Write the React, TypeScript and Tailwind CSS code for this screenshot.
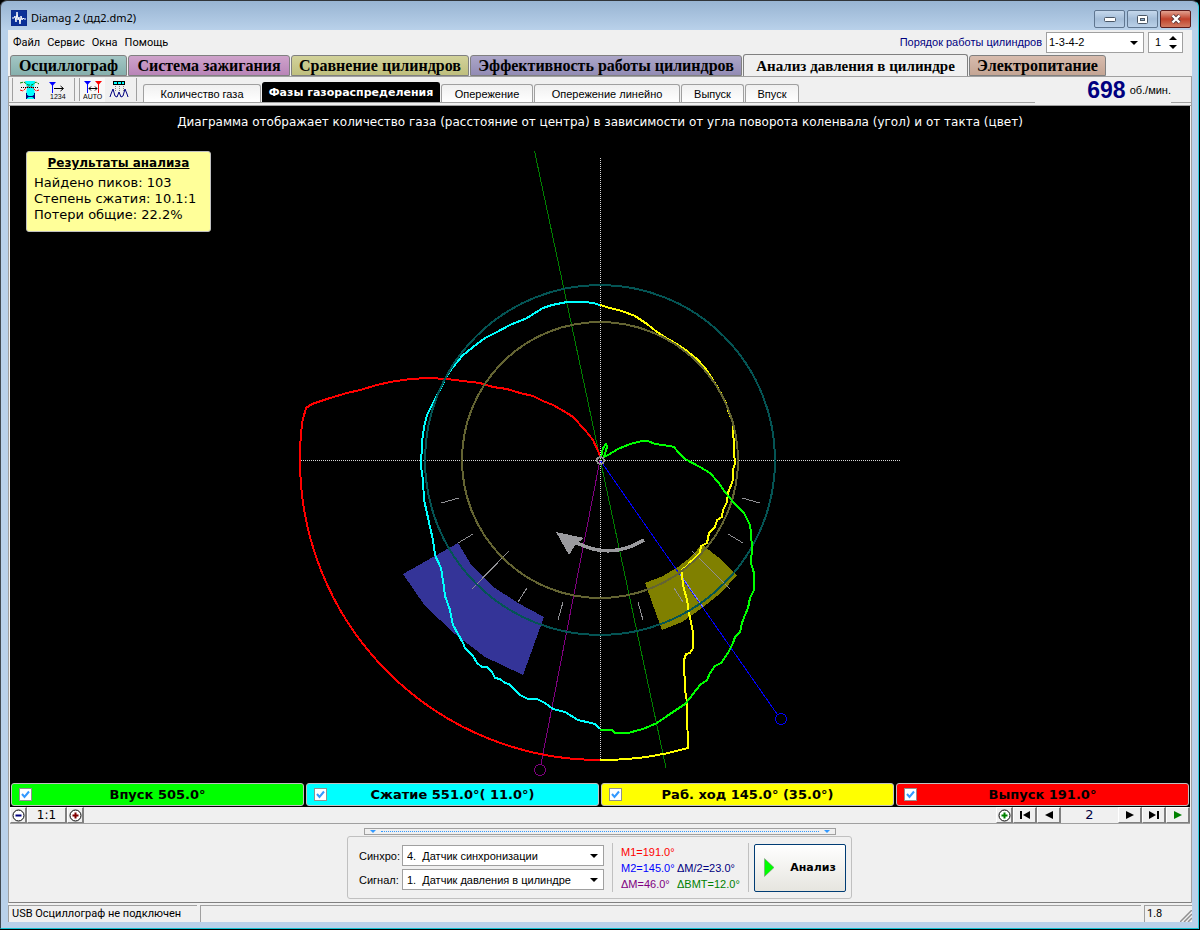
import React, { useState } from 'react'
import clsx from 'clsx'

const MAIN_TABS = [
  { label: 'Осциллограф', className: 'w-[117px] from-[#a3c6c4] to-[#86b0ad]' },
  { label: 'Система зажигания', className: 'w-[162px] from-[#cfa3cb] to-[#b985b8]' },
  { label: 'Сравнение цилиндров', className: 'w-[178px] from-[#d2d29a] to-[#bfbf7e]' },
  { label: 'Эффективность работы цилиндров', className: 'w-[272px] from-[#aca6c8] to-[#938cb5]' },
  { label: 'Анализ давления в цилиндре', className: 'w-[225px]', active: true },
  { label: 'Электропитание', className: 'w-[137px] from-[#d8bcae] to-[#c4a594]' },
]

const SUB_TABS = [
  { label: 'Количество газа', className: 'w-[118px]' },
  { label: 'Фазы газораспределения', className: 'w-[178px]', active: true },
  { label: 'Опережение', className: 'w-[92px]' },
  { label: 'Опережение линейно', className: 'w-[146px]' },
  { label: 'Выпуск', className: 'w-[63px]' },
  { label: 'Впуск', className: 'w-[54px]' },
]

const STROKES = [
  { id: 'intake', label: 'Впуск 505.0°', color: 'bg-[#00ff00]' },
  { id: 'compression', label: 'Сжатие 551.0°( 11.0°)', color: 'bg-[#00ffff]' },
  { id: 'power', label: 'Раб. ход 145.0° (35.0°)', color: 'bg-[#ffff00]' },
  { id: 'exhaust', label: 'Выпуск 191.0°', color: 'bg-[#ff0000]' },
]

const INTAKE_CURVE =
  '600,730 612,730 615,733 622,733 628,733 643,729 657,723 670,714 685,704 690,698 700,685 707,680 710,673 715,666 721,663 728,653 733,643 735,637 740,632 742,623 745,615 748,608 750,598 754,590 754,573 751,563 752,548 751,533 750,525 744,513 733,502 725,492 718,482 710,473 700,467 685,459 678,452 674,447 670,446 655,444 648,441 642,441 630,444 618,449 608,455 604,457 607,447 606,444 603,448 601,457'
const COMPRESSION_CURVE =
  '600,305 593,303 585,302 567,302 552,305 543,308 527,318 510,325 497,332 485,338 477,344 463,355 453,367 446,377 440,390 433,403 427,415 424,427 422,442 421,467 423,480 424,500 427,513 430,527 433,540 435,555 441,568 444,587 445,596 450,610 453,625 463,643 465,648 473,656 477,663 482,667 487,667 492,672 495,678 500,679 505,683 509,684 515,690 520,695 528,699 537,699 545,703 553,709 565,712 578,720 595,724 600,729'
const POWER_CURVE =
  'M600,760 A300,300 0 0 0 688,748 L688,740 L687,720 L687,702 L685,690 L684,660 L686,654 L690,653 L693,648 L693,632 L689,613 L687,600 L683,585 L682,575 L682,570 L688,565 L690,562 L695,558 L700,553 L701,546 L707,543 L709,533 L715,527 L717,520 L722,517 L723,510 L727,502 L728,493 L733,480 L733,470 L735,463 L734,452 L733,423 L729,413 L726,403 L718,388 L713,380 L705,368 L697,359 L687,351 L680,346 L668,339 L657,332 L647,324 L635,316 L622,311 L610,308 L600,305'
const EXHAUST_CURVE =
  'M600,457 L599,453 L593,440 L585,430 L573,417 L567,413 L553,405 L543,401 L533,396 L520,393 L507,389 L493,387 L480,383 L463,381 L447,379 L428,378 L410,379 L390,382 L377,385 L360,390 L347,393 L330,398 L312,404 L306,408 L302,423 L300,447 L300,460 A300,300 0 0 0 600,760'

const TICKS = [
  [441, 503, 459, 498],
  [458, 543, 473, 534],
  [472, 589, 509, 551],
  [518, 602, 527, 588],
  [558, 620, 563, 602],
  [742, 498, 760, 503],
  [728, 534, 743, 543],
  [692, 551, 730, 589],
  [674, 588, 683, 602],
  [638, 602, 643, 620],
]

const AppIcon = () => (
  <svg width="16" height="16" viewBox="0 0 16 16" className="shrink-0">
    <rect width="16" height="16" fill="#0b2a8c" />
    <rect x="1" y="1" width="14" height="14" fill="#0a3098" />
    <path d="M1 8h2l1-2 1 6 1-10 1 8 1-3 1 7 1-8 1 4 1-2 1 1h2" fill="none" stroke="#fff" />
  </svg>
)

const Caret: React.FC<{ className?: string }> = ({ className }) => (
  <svg width="8" height="4" viewBox="0 0 8 4" className={clsx('pointer-events-none', className)}>
    <path d="M0 0h8L4 4z" fill="#000" />
  </svg>
)

const TitleBar: React.FC = () => (
  <header className="h-[29px] shrink-0 flex justify-between pl-[3px]">
    <div className="flex items-center gap-1 pt-1">
      <AppIcon />
      <h1 className="font-['Noto_Sans',sans-serif] text-[11px] leading-4 text-black">Diamag 2 (дд2.dm2)</h1>
    </div>
    <div className="flex gap-[2px] pt-[9px] pr-px">
      <button
        aria-label="Свернуть"
        className="w-[31px] h-[18px] rounded-[2px] border border-[#5f7690] bg-linear-to-b from-[#c5d8ec] via-[#a4bdd8] to-[#bad0e8] flex items-center justify-center"
      >
        <svg width="12" height="6" viewBox="0 0 12 6">
          <rect x="0.5" y="1.5" width="11" height="4" rx="1" fill="#fff" stroke="#4a5766" />
        </svg>
      </button>
      <button
        aria-label="Развернуть"
        className="w-[31px] h-[18px] rounded-[2px] border border-[#5f7690] bg-linear-to-b from-[#c5d8ec] via-[#a4bdd8] to-[#bad0e8] flex items-center justify-center"
      >
        <svg width="11" height="9" viewBox="0 0 11 9">
          <rect x="0.5" y="0.5" width="10" height="8" rx="1" fill="#fff" stroke="#4a5766" />
          <rect x="3.5" y="3.5" width="4" height="2" fill="#8fb0d0" stroke="#4a5766" />
        </svg>
      </button>
      <button
        aria-label="Закрыть"
        className="w-[31px] h-[18px] rounded-[2px] border border-[#5c1a1a] bg-linear-to-b from-[#e0a090] via-[#c0402a] to-[#d07a62] flex items-center justify-center"
      >
        <svg width="12" height="10" viewBox="0 0 12 10">
          <path d="M2.5 1.5l7 7m0-7l-7 7" stroke="#54363a" strokeWidth="4" />
          <path d="M2.5 1.5l7 7m0-7l-7 7" stroke="#fff" strokeWidth="2.4" />
        </svg>
      </button>
    </div>
  </header>
)

const MenuBar: React.FC = () => (
  <div className="h-6 shrink-0 flex items-center justify-between pl-[5px] pr-[9px]">
    <nav className="flex gap-[7px] pt-[2px] font-['Roboto',sans-serif] text-[11px] leading-4 text-black">
      <button>Файл</button>
      <button>Сервис</button>
      <button>Окна</button>
      <button>Помощь</button>
    </nav>
    <div className="flex items-center gap-1 font-['Liberation_Sans',sans-serif] text-[11px]">
      <label htmlFor="order" className="text-[#000080]">
        Порядок работы цилиндров
      </label>
      <div className="relative">
        <select
          id="order"
          className="appearance-none block w-[98px] h-[21px] pl-[2px] bg-white border border-[#a0a0a0] text-black"
        >
          <option>1-3-4-2</option>
          <option>1-2-4-3</option>
        </select>
        <Caret className="absolute right-[6px] top-[9px]" />
      </div>
      <div className="w-[35px] h-[21px] flex items-center justify-between bg-white border border-[#a0a0a0] pl-[6px] pr-[5px]">
        <input aria-label="Цилиндр" defaultValue="1" className="w-3 text-black outline-none" />
        <div className="flex flex-col gap-[5px]">
          <button aria-label="Больше">
            <svg width="8" height="4" viewBox="0 0 8 4" className="block">
              <path d="M0 4h8L4 0z" fill="#000" />
            </svg>
          </button>
          <button aria-label="Меньше">
            <Caret className="block" />
          </button>
        </div>
      </div>
    </div>
  </div>
)

const MainTabs: React.FC = () => (
  <div className="h-[22px] shrink-0 flex items-end gap-px pl-[2px] pr-2" role="tablist">
    {MAIN_TABS.map((tab) => (
      <button
        key={tab.label}
        role="tab"
        aria-selected={!!tab.active}
        className={clsx(
          "shrink-0 whitespace-nowrap rounded-t-[3px] border border-[#808080] font-['Liberation_Serif',serif] leading-5 font-bold text-black",
          tab.active ? 'h-[23px] -mb-px bg-[#f0f0f0] border-b-0 text-[15px]' : 'h-[21px] bg-linear-to-b text-[16px]',
          tab.className
        )}
      >
        {tab.label}
      </button>
    ))}
  </div>
)

const Separator = () => <span className="w-px h-[23px] bg-[#a0a0a0]" />

const ToolBar: React.FC = () => (
  <div className="h-[29px] shrink-0 border-t border-[#a0a0a0] pb-[2px] flex items-end justify-between">
    <div className="flex items-end grow border-b border-[#a0a0a0]">
      <div className="flex items-center pl-[3px] h-[25px]">
        <Separator />
        <button aria-label="Фазы" className="ml-[7px] w-[20px] h-[20px]">
          <svg width="20" height="20" viewBox="0 0 20 20">
            <path d="M5 1h10l-1 7 1 6v5H6v-5l1-6z" fill="#00ffff" />
            <path d="M0 3l4-1 4 3h4l4-3 3 2" fill="none" stroke="#008000" strokeDasharray="3 1" />
            <path d="M0 10l3 1 4-4h5l4 4 3-1" fill="none" stroke="#ff0000" strokeDasharray="3 1" />
            <path d="M1 7.500h18" stroke="#000" strokeDasharray="1 1" />
            <path d="M6.500 13v6M14.500 13v6M7 16.500h7M8 15l-1 1.500 1 1.500M13 15l1 1.500-1 1.500" fill="none" stroke="#000080" />
          </svg>
        </button>
        <button aria-label="Нумерация" className="ml-2 w-[18px] h-[20px]">
          <svg width="18" height="20" viewBox="0 0 18 20">
            <path d="M1 2h7L4.500 6z" fill="#0000ff" />
            <path d="M4.500 3v10" stroke="#0000ff" />
            <path d="M6 8.500h9M12.500 6l3 2.500-3 2.500" fill="none" stroke="#000" />
            <text x="2" y="19" fontSize="7" fontFamily="Liberation Sans, sans-serif">1234</text>
          </svg>
        </button>
        <span className="w-2" />
        <Separator />
        <span className="w-1" />
        <Separator />
        <button aria-label="Авто" className="w-[25px] h-[24px] bg-[#f8f8f8] flex items-center justify-center">
          <svg width="20" height="20" viewBox="0 0 20 20">
            <path d="M1 1h7L4.500 5z" fill="#0000ff" />
            <path d="M4.500 3v10" stroke="#0000ff" />
            <path d="M12 1h7l-3.500 4z" fill="#ff0000" />
            <path d="M15.500 3v10" stroke="#ff0000" />
            <path d="M6 8.500h8M8 6.500l-2 2 2 2M12 6.500l2 2-2 2" fill="none" stroke="#000" />
            <text x="0" y="19" fontSize="7" fontFamily="Liberation Sans, sans-serif">AUTO</text>
          </svg>
        </button>
        <button aria-label="Поиск пиков" className="ml-1 w-[20px] h-[20px]">
          <svg width="20" height="20" viewBox="0 0 20 20">
            <rect x="4.500" y="1.500" width="11" height="3" fill="#00ffff" stroke="#000" />
            <path d="M8.500 1v4M12.500 1v4" stroke="#000" />
            <path d="M6.500 6v6M10.500 6v6M14.500 6v6" stroke="#808080" strokeDasharray="1 1" />
            <path d="M1 17l1-3 2-5 2 7 2 1 2-5 2 5 2-1 2-7 2 5 1 3" fill="none" stroke="#000080" />
          </svg>
        </button>
        <span className="w-[7px]" />
        <Separator />
      </div>
      <div className="flex items-end gap-px pl-[6px]" role="tablist">
        {SUB_TABS.map((tab) => (
          <button
            key={tab.label}
            role="tab"
            aria-selected={!!tab.active}
            className={clsx(
              'shrink-0 whitespace-nowrap rounded-t-[3px] border border-b-0 text-[11px] leading-4',
              tab.active
                ? "h-5 bg-black border-black text-white font-bold font-['DejaVu_Sans',sans-serif]"
                : "h-[18px] border-[#a0a0a0] bg-linear-to-b from-[#f0f0f0] to-white text-black font-['Liberation_Sans',sans-serif]",
              tab.className
            )}
          >
            {tab.label}
          </button>
        ))}
      </div>
    </div>
    <div className="w-[136px] h-full flex items-center justify-end gap-1 font-['Liberation_Sans',sans-serif]">
      <span className="text-[23px] leading-6 font-bold text-[#000080]">698</span>
      <span className="text-[11px] leading-4 text-black">об./мин.</span>
    </div>
    <span className="w-5 border-b border-[#a0a0a0]" />
  </div>
)

const PhaseDiagram: React.FC<{ visible: Record<string, boolean> }> = ({ visible }) => (
  <svg
    viewBox="10 106 1180 677"
    className="absolute inset-0 w-full h-full"
    fill="none"
    shapeRendering="crispEdges"
  >
    <polygon
      points="458,543 472,566 492,586 518,603 544,617 523,675 485,657 455,634 425,606 403,574"
      fill="#343498"
    />
    <polygon
      points="702,544 692,556 678,567 663,576 645,583 662,630 682,622 702,608 722,592 737,575 718,557 705,547"
      fill="#808000"
    />
    <g stroke="#909094">
      {TICKS.map(([x1, y1, x2, y2]) => (
        <line key={`${x1}-${y1}`} x1={x1} y1={y1} x2={x2} y2={y2} />
      ))}
    </g>

    {/* Markers */}
    <line x1="534.5" y1="151" x2="666" y2="768" stroke="#008000" />
    <line x1="600" y1="460" x2="541" y2="764" stroke="#800080" />
    <line x1="600" y1="460" x2="777" y2="714" stroke="#0000ff" />
    <line x1="680" y1="574" x2="703" y2="607" stroke="#8080ff" />
    <circle cx="540" cy="770" r="5.500" stroke="#800080" />
    <circle cx="781" cy="719" r="5.500" stroke="#0000ff" />

    {/* Axes */}
    <path d="M299 460.500H901M600.500 158V761" stroke="#d8d8d8" strokeDasharray="1 1" />

    <g strokeWidth="2" strokeLinejoin="round">
      {visible.exhaust && <path d={EXHAUST_CURVE} stroke="#ff0000" />}
      {visible.compression && <polyline points={COMPRESSION_CURVE} stroke="#00ffff" />}
      {visible.power && <path d={POWER_CURVE} stroke="#ffff00" />}
      <circle cx="600" cy="460" r="175" stroke="#045454" />
      <circle cx="600" cy="460" r="138" stroke="#646432" />
      {visible.intake && <polyline points={INTAKE_CURVE} stroke="#00ff00" />}
      <circle cx="600.500" cy="460.500" r="3.500" stroke="#909090" />
    </g>

    {/* Rotation direction */}
    <path d="M577 543Q611 560 644 540" stroke="#9a9a9e" strokeWidth="3.500" />
    <path d="M556 532L584 538L576 544L569 555z" fill="#9a9a9e" />
  </svg>
)

const ResultCard: React.FC = () => (
  <div className="w-[185px] h-[81px] rounded-[3px] border border-[#c0c0c0] bg-[#ffff99] px-[7px] pt-[3px] text-[13px] leading-4 text-black">
    <h2 className="pb-1 text-center text-[12px] font-bold underline">Результаты анализа</h2>
    <p>Найдено пиков: 103</p>
    <p>Степень сжатия: 10.1:1</p>
    <p>Потери общие: 22.2%</p>
  </div>
)

const StrokeLegend: React.FC<{
  visible: Record<string, boolean>
  onToggle: (id: string) => void
}> = ({ visible, onToggle }) => (
  <div className="h-6 shrink-0 bg-black grid grid-cols-4 gap-[2px] px-px">
    {STROKES.map((stroke) => (
      <label
        key={stroke.id}
        className={clsx(
          "h-[23px] rounded-[3px] border border-[#c0c0c0] flex items-center pl-[7px] pr-5 font-['DejaVu_Sans',sans-serif] text-[13px] leading-4 font-bold text-black",
          stroke.color
        )}
      >
        <span className="relative w-[13px] h-[13px]">
          <input
            type="checkbox"
            checked={visible[stroke.id]}
            onChange={() => onToggle(stroke.id)}
            className="peer appearance-none block w-[13px] h-[13px] bg-white border border-[#909090]"
          />
          <svg
            width="9"
            height="9"
            viewBox="0 0 9 9"
            className="absolute left-[2px] top-[2px] hidden peer-checked:block pointer-events-none"
          >
            <path d="M1 4l2.500 3L8 1.500" fill="none" stroke="#3399ff" strokeWidth="2" />
          </svg>
        </span>
        <span className="flex-1 text-center">{stroke.label}</span>
      </label>
    ))}
  </div>
)

const NavButton: React.FC<{ label: string; className?: string; children: React.ReactNode }> = ({
  label,
  className,
  children,
}) => (
  <button
    aria-label={label}
    className={clsx(
      'h-4 flex items-center justify-center border-l border-t border-l-white border-t-white border-r-2 border-b border-r-[#808080] border-b-[#808080] bg-[#f0f0f0]',
      className
    )}
  >
    {children}
  </button>
)

const ZoomGlyph: React.FC<{ color: string; plus?: boolean }> = ({ color, plus }) => (
  <svg width="13" height="13" viewBox="0 0 13 13" className="shrink-0">
    <circle cx="6.500" cy="6.500" r="5.500" fill="#fff" stroke="#000" />
    <path d={plus ? 'M3.500 6.500h6M6.500 3.500v6' : 'M3.500 6.500h6'} stroke={color} strokeWidth="2" />
  </svg>
)

const ScaleBar: React.FC = () => (
  <div className="h-[17px] shrink-0 flex justify-between border-b border-[#a0a0a0] font-['DejaVu_Sans',sans-serif] text-[13px] leading-4">
    <div className="flex">
      <NavButton label="Уменьшить" className="w-[17px]">
        <ZoomGlyph color="#000080" />
      </NavButton>
      <NavButton label="Исходный масштаб" className="w-10 text-[12px]">
        1:1
      </NavButton>
      <NavButton label="Увеличить" className="w-[17px]">
        <ZoomGlyph color="#800000" plus />
      </NavButton>
    </div>
    <div className="flex">
      <NavButton label="Добавить" className="w-[17px]">
        <ZoomGlyph color="#008000" plus />
      </NavButton>
      <NavButton label="В начало" className="w-6">
        <svg width="10" height="8" viewBox="0 0 10 8">
          <path d="M0 0h2v8H0zM10 0v8L3 4z" />
        </svg>
      </NavButton>
      <NavButton label="Назад" className="w-6">
        <svg width="8" height="8" viewBox="0 0 8 8">
          <path d="M8 0v8L0 4z" />
        </svg>
      </NavButton>
      <span className="w-[57px] text-center text-[#000040]">2</span>
      <NavButton label="Вперёд" className="w-6">
        <svg width="8" height="8" viewBox="0 0 8 8">
          <path d="M0 0v8l8-4z" />
        </svg>
      </NavButton>
      <NavButton label="В конец" className="w-6">
        <svg width="10" height="8" viewBox="0 0 10 8">
          <path d="M8 0h2v8H8zM0 0v8l7-4z" />
        </svg>
      </NavButton>
      <NavButton label="Воспроизвести" className="w-6">
        <svg width="8" height="8" viewBox="0 0 8 8">
          <path d="M0 0v8l8-4z" fill="#008000" />
        </svg>
      </NavButton>
    </div>
  </div>
)

const ChannelSelect: React.FC<{ id: string; label: string; options: string[] }> = ({ id, label, options }) => (
  <div className="flex items-center">
    <label htmlFor={id} className="w-[43px]">
      {label}
    </label>
    <div className="relative">
      <select
        id={id}
        className="appearance-none block w-[202px] h-[21px] pl-1 bg-white border border-[#a0a0a0] whitespace-pre"
      >
        {options.map((option) => (
          <option key={option}>{option}</option>
        ))}
      </select>
      <Caret className="absolute right-[6px] top-[9px]" />
    </div>
  </div>
)

const ControlPanel: React.FC = () => (
  <section className="h-[79px] shrink-0 flex flex-col items-center pt-1 pr-px border-b border-[#808080] font-['Liberation_Sans',sans-serif] text-[11px] leading-4 text-black">
    <button
      aria-label="Свернуть панель"
      className="w-[472px] h-[7px] border border-[#a0a0a0] flex items-center gap-[5px] px-[5px]"
    >
      <svg width="6" height="3" viewBox="0 0 6 3">
        <path d="M0 0h6L3 3z" fill="#3399ff" />
      </svg>
      <span className="grow border-t border-dotted border-[#3399ff]" />
      <svg width="6" height="3" viewBox="0 0 6 3">
        <path d="M0 0h6L3 3z" fill="#3399ff" />
      </svg>
    </button>
    <div className="mt-px w-[505px] h-[63px] rounded-[3px] border border-[#c0c0c0] flex items-center pl-[11px] pr-[5px]">
      <div className="flex flex-col gap-[3px]">
        <ChannelSelect
          id="sync"
          label="Синхро:"
          options={['4.\u00a0 Датчик синхронизации', '3.\u00a0 Датчик синхронизации']}
        />
        <ChannelSelect
          id="signal"
          label="Сигнал:"
          options={['1.\u00a0 Датчик давления в цилиндре', '2.\u00a0 Датчик давления в цилиндре']}
        />
      </div>
      <span className="ml-2 w-px h-[49px] bg-[#c0c0c0]" />
      <div className="ml-2 w-[127px] grid grid-cols-[56px_auto] leading-4 whitespace-nowrap">
        <span className="text-[#ff0000]">M1=191.0°</span>
        <span />
        <span className="text-[#0000ff]">M2=145.0°</span>
        <span className="text-[#000080]">ΔM/2=23.0°</span>
        <span className="text-[#800080]">ΔM=46.0°</span>
        <span className="text-[#008000]">ΔBMT=12.0°</span>
      </div>
      <span className="w-px h-[49px] bg-[#c0c0c0]" />
      <button className="ml-auto w-[92px] h-[48px] rounded-[2px] border border-[#003c74] bg-linear-to-b from-white to-[#e6e5df] flex items-center justify-center gap-4 font-['DejaVu_Sans',sans-serif] text-[11px] font-bold">
        <svg width="10" height="19" viewBox="0 0 10 19">
          <path d="M0.500 0.500v18l9.500-9z" fill="#00ff00" stroke="#808080" strokeWidth="0.500" />
        </svg>
        Анализ
      </button>
    </div>
  </section>
)

const StatusBar: React.FC = () => (
  <footer className="h-[19px] shrink-0 pt-[2px] flex gap-[3px] font-['Roboto',sans-serif] text-[11px] leading-4 text-black">
    <div className="w-[189px] border-l border-t border-[#a0a0a0] pl-[3px]">USB Осциллограф не подключен</div>
    <div className="grow border-l border-t border-[#a0a0a0]" />
    <div className="w-12 border-l border-t border-[#a0a0a0] pl-[2px] flex items-end justify-between">
      1.8
      <svg width="12" height="12" viewBox="0 0 12 12">
        <path d="M0 12L12 0M4 12l8-8M8 12l4-4" stroke="#909090" strokeWidth="1.500" />
      </svg>
    </div>
  </footer>
)

export default function App() {
  const [visible, setVisible] = useState<Record<string, boolean>>({
    intake: true,
    compression: true,
    power: true,
    exhaust: true,
  })

  const toggleStroke = (id: string) => setVisible((prev) => ({ ...prev, [id]: !prev[id] }))

  return (
    <div className="h-screen bg-black pb-px pr-px">
      <div className="h-full rounded-t-[7px] border border-t-[#303438] border-l-[#404850] border-r-[#30d0e0] border-b-[#10c0d0] bg-[#b9d1ea] bg-linear-to-b from-[#98b4d2] to-[#b9d1ea] to-[29px] flex flex-col pl-[7px] pr-[6px] pb-[6px]">
        <TitleBar />
        <main className="flex-1 min-h-0 flex flex-col bg-[#f0f0f0]">
          <MenuBar />
          <MainTabs />
          <div className="flex-1 min-h-0 flex flex-col border-l border-r border-[#a0a0a0]">
            <ToolBar />
            <div className="flex-1 min-h-0 flex flex-col px-px border-t border-[#a0a0a0]">
              <div className="relative flex-1 min-h-0 bg-black font-['DejaVu_Sans',sans-serif]">
                <PhaseDiagram visible={visible} />
                <div className="relative flex flex-col gap-[21px] pt-2 pl-4">
                  <p className="text-center pr-4 text-[12px] leading-4 text-white">
                    Диаграмма отображает количество газа (расстояние от центра) в зависимости от угла поворота коленвала
                    (угол) и от такта (цвет)
                  </p>
                  <ResultCard />
                </div>
              </div>
              <StrokeLegend visible={visible} onToggle={toggleStroke} />
              <ScaleBar />
            </div>
            <ControlPanel />
          </div>
          <StatusBar />
        </main>
      </div>
    </div>
  )
}
